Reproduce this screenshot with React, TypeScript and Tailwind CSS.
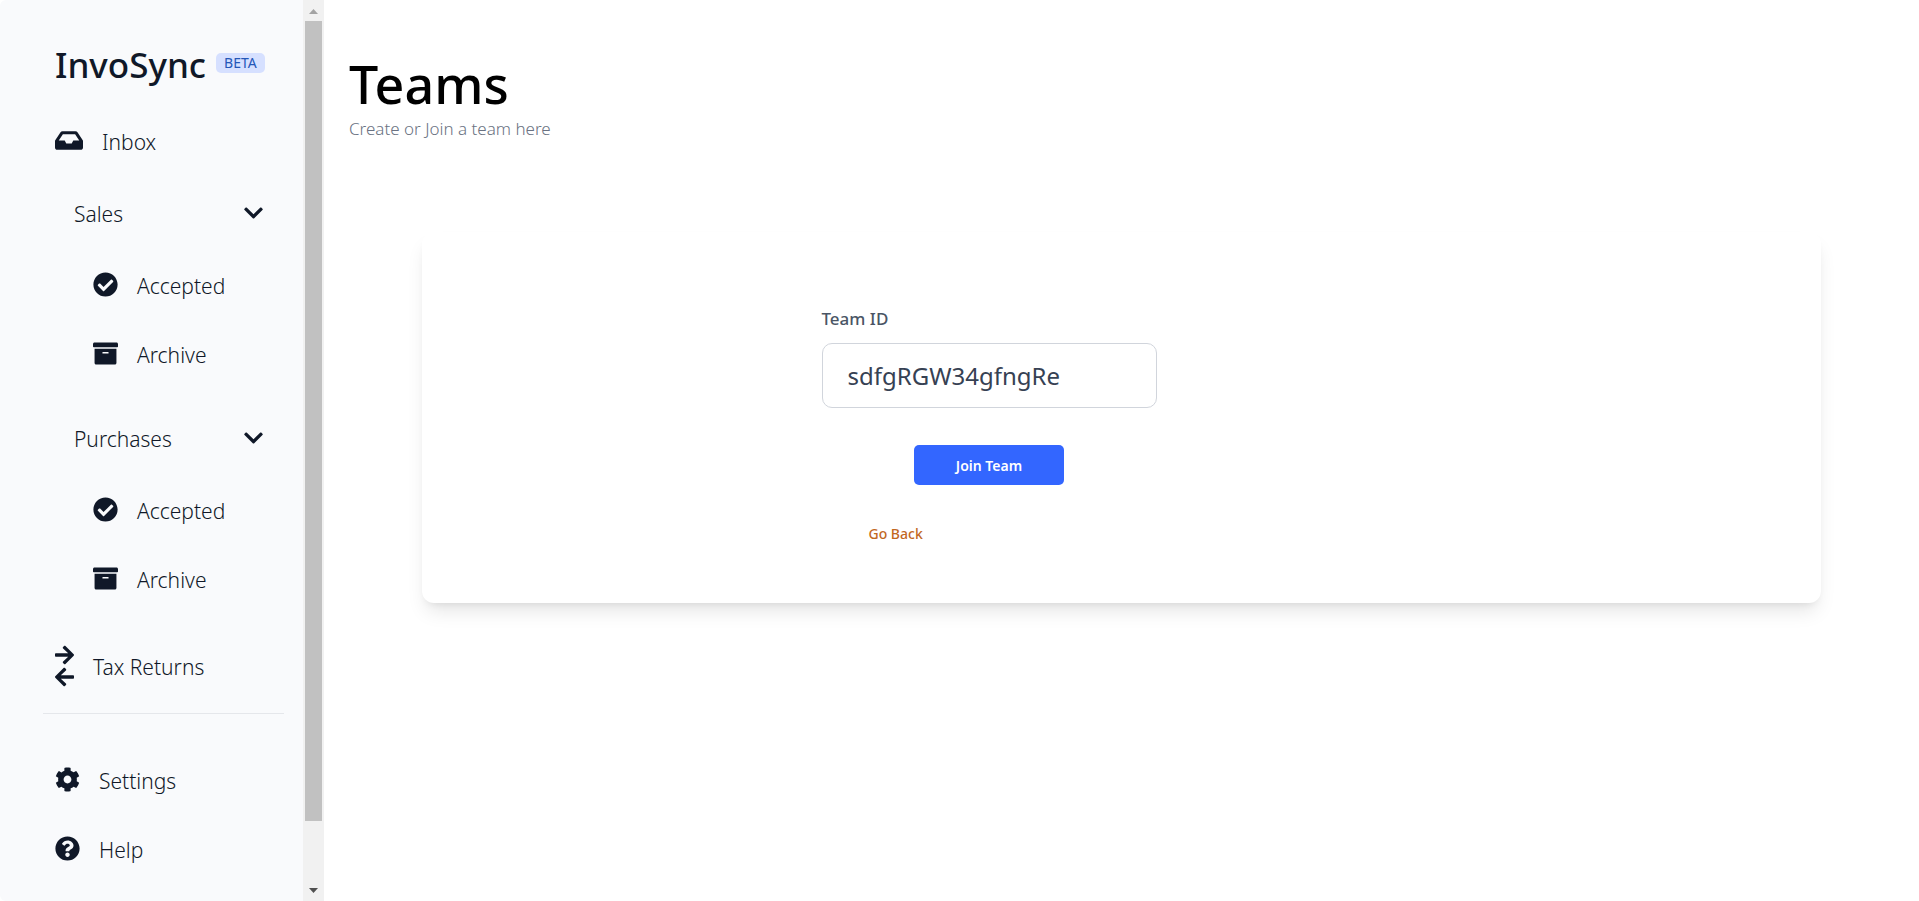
import { useState } from "react";
import type { ReactNode } from "react";
import type { IconType } from "react-icons";
import {
  FaArchive,
  FaArrowLeft,
  FaArrowRight,
  FaCheckCircle,
  FaChevronDown,
  FaCog,
  FaInbox,
  FaQuestionCircle,
} from "react-icons/fa";

function NavLink({
  icon: Icon,
  iconWidth = "w-[25px]",
  children,
}: {
  icon: IconType;
  iconWidth?: string;
  children: ReactNode;
}) {
  return (
    <a href="#" className="flex h-[69px] items-center gap-[19px]">
      <Icon className={`mb-1 h-[25px] shrink-0 ${iconWidth}`} />
      <span>{children}</span>
    </a>
  );
}

function NavGroup({ title }: { title: string }) {
  const [open, setOpen] = useState(true);

  return (
    <div className="mb-3 pl-[19px]">
      <button
        type="button"
        aria-expanded={open}
        onClick={() => setOpen(!open)}
        className="flex h-[75px] w-full items-center justify-between pr-[21px]"
      >
        <span>{title}</span>
        <FaChevronDown className="mb-1 h-[22px] w-[19px]" />
      </button>
      {open && (
        <div className="pl-[19px]">
          <NavLink icon={FaCheckCircle}>Accepted</NavLink>
          <NavLink icon={FaArchive}>Archive</NavLink>
        </div>
      )}
    </div>
  );
}

function ScrollRail() {
  return (
    <div aria-hidden className="flex w-[21px] shrink-0 flex-col items-center bg-[#f1f1f1]">
      <svg width="21" height="21" viewBox="0 0 21 21" className="shrink-0">
        <path d="M6 14 L10.5 9 L15 14 Z" fill="#a3a3a3" />
      </svg>
      <div className="w-[17px] grow bg-[#c1c1c1]" />
      <div className="h-[59px] shrink-0" />
      <svg width="21" height="21" viewBox="0 0 21 21" className="shrink-0">
        <path d="M6 8 L10.5 13 L15 8 Z" fill="#505050" />
      </svg>
    </div>
  );
}

function Sidebar() {
  return (
    <aside className="flex h-screen shrink-0">
      <nav className="w-[303px] rounded-l-md bg-[#f9fafc] pt-[41px] pr-[19px] pl-[43px] text-[21px] font-[350] text-gray-900">
        <div className="flex h-[67px] items-start gap-[10px] pl-3">
          <span className="text-[35px] leading-[48px] font-medium">InvoSync</span>
          <span className="mt-3 rounded-[5px] bg-[#d6e0ff] px-2 text-[14px] leading-5 font-normal text-[#2457b8]">
            BETA
          </span>
        </div>
        <div className="pl-3">
          <NavLink icon={FaInbox} iconWidth="w-7">
            Inbox
          </NavLink>
          <NavGroup title="Sales" />
          <NavGroup title="Purchases" />
          <a href="#" className="flex h-[81px] items-center gap-[19px]">
            <span className="mb-1 flex shrink-0 flex-col">
              <FaArrowRight className="h-[22px] w-[19px]" />
              <FaArrowLeft className="h-[22px] w-[19px]" />
            </span>
            <span>Tax Returns</span>
          </a>
        </div>
        <hr className="mt-[5px] mb-[33px] border-gray-200" />
        <div className="pl-3">
          <NavLink icon={FaCog}>Settings</NavLink>
          <NavLink icon={FaQuestionCircle}>Help</NavLink>
        </div>
      </nav>
      <ScrollRail />
    </aside>
  );
}

function JoinTeamCard() {
  const [teamId, setTeamId] = useState("sdfgRGW34gfngRe");

  return (
    <section className="mx-[73px] mt-[91px] rounded-xl bg-white pt-[73px] pb-14 shadow-[0_12px_19px_-4px_rgb(0_0_0/0.1),0_5px_8px_-5px_rgb(0_0_0/0.1)]">
      <div className="mx-auto max-w-[600px]">
        <form className="flex w-[335px] flex-col" onSubmit={(e) => e.preventDefault()}>
          <label htmlFor="team-id" className="text-[17px] leading-7 font-medium text-gray-600">
            Team ID
          </label>
          <input
            id="team-id"
            type="text"
            value={teamId}
            onChange={(e) => setTeamId(e.target.value)}
            className="mt-[10px] h-[65px] rounded-[10px] border border-gray-300 px-[25px] text-[24px] text-gray-700 outline-none"
          />
          <button
            type="submit"
            className="mt-[37px] h-10 w-[150px] self-center rounded-[5px] bg-[#3366ff] text-[14px] font-semibold text-white"
          >
            Join Team
          </button>
        </form>
        <button type="button" className="mt-9 ml-[47px] block text-[14px] leading-[26px] font-medium text-[#c2681f]">
          Go Back
        </button>
      </div>
    </section>
  );
}

export default function App() {
  return (
    <div className="flex h-screen overflow-hidden bg-white font-['Noto_Sans','Open_Sans',sans-serif]">
      <Sidebar />
      <main className="grow px-[25px] pt-[50px]">
        <h1 className="text-[52px] leading-[67px] font-medium text-black">Teams</h1>
        <p className="text-[17px] leading-6 font-[350] text-gray-500">Create or Join a team here</p>
        <JoinTeamCard />
      </main>
    </div>
  );
}
